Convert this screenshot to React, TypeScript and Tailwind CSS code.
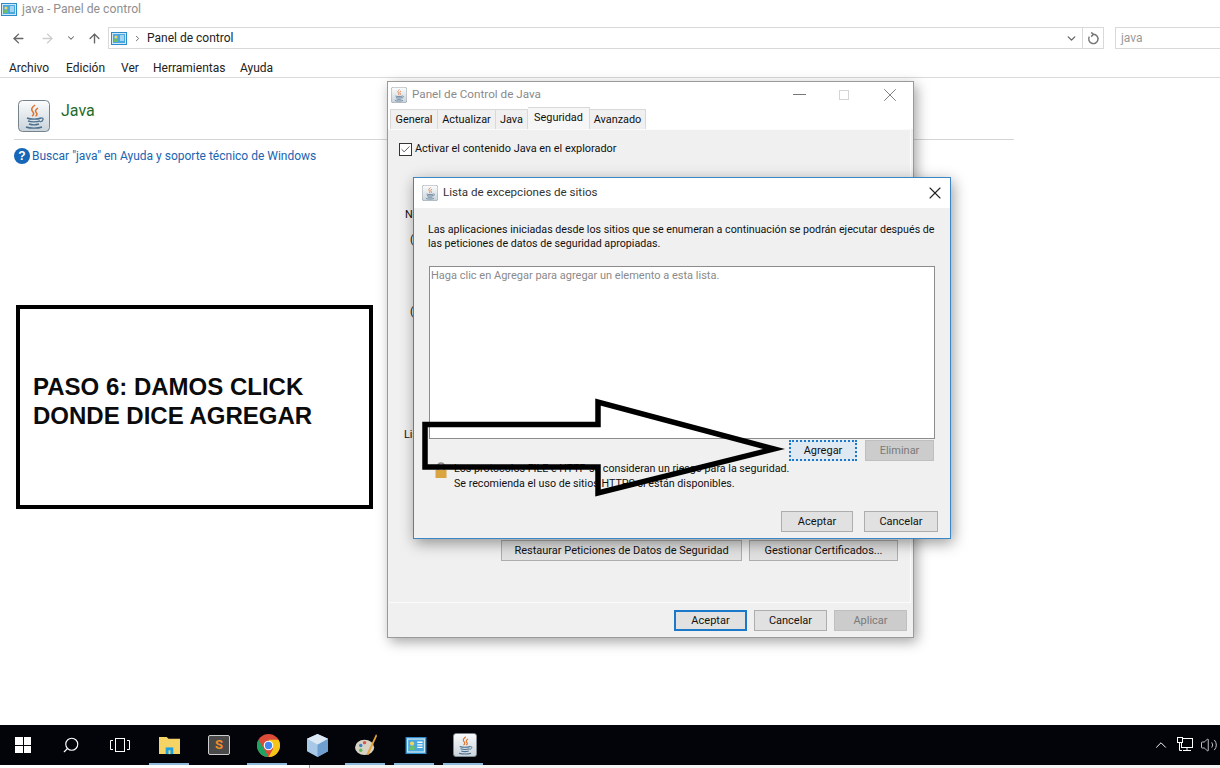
import { ArrowLeft, ArrowRight, ArrowUp, ChevronDown, ChevronRight, ChevronUp, Search, X, Check, Volume2 } from 'lucide-react';

function ControlPanelIcon({ className }: { className: string }) {
  return (
    <svg viewBox="0 0 16 13" className={className}>
      <rect x="0.5" y="0.5" width="15" height="12" fill="#cfe8f7" stroke="#2d8bc9" />
      <rect x="2" y="2" width="12" height="9" fill="#4aa8e0" />
      <circle cx="5" cy="5" r="1.6" fill="#f4d35e" />
      <rect x="3" y="7" width="4" height="3" fill="#6cbf6a" />
      <path d="M9 4h4M9 6h4M9 8h4" stroke="#fff" strokeWidth="1" />
    </svg>
  );
}

function JavaIcon({ className }: { className: string }) {
  return (
    <svg viewBox="0 0 32 32" className={className}>
      <defs>
        <linearGradient id="javaBg" x1="0" y1="0" x2="0" y2="1">
          <stop offset="0" stopColor="#fbfcfd" />
          <stop offset="1" stopColor="#c9d3da" />
        </linearGradient>
      </defs>
      <rect x="0.5" y="0.5" width="31" height="31" rx="4" fill="url(#javaBg)" stroke="#76838c" />
      <path d="M17 5c-4 3-4 5-2 7 1 1.500 1 3-1 4M20 8c-3 2-3 3-1.500 5 1 1 .5 2.500-1 3" fill="none" stroke="#e0702a" strokeWidth="1.500" />
      <path d="M9 18c3 1.500 11 1.500 14 0M10 21c3 1 9 1 12 0M11 24c3 1 7 1 10 0M8 27c4 1.500 12 1.500 16 0" fill="none" stroke="#4b6f8e" strokeWidth="1.400" />
      <path d="M23 18c3-.5 3 3-1 4" fill="none" stroke="#4b6f8e" strokeWidth="1.200" />
    </svg>
  );
}

function HelpIcon() {
  return (
    <div className="w-4 h-4 rounded-full bg-[#1667b8] text-white text-[12px] font-bold flex items-center justify-center font-['Liberation_Sans',sans-serif]">
      ?
    </div>
  );
}

function WinButton({ label, w, tone = 'normal' }: { label: string; w: string; tone?: 'normal' | 'off' | 'default' | 'focus' }) {
  const toneClass =
    tone === 'off'
      ? 'bg-[#cccccc] border-[#bfbfbf] text-[#7a7a7a]'
      : tone === 'default'
        ? 'bg-[#e1e1e1] border-[#1c78c8] border-2 text-[#111]'
        : tone === 'focus'
          ? 'bg-[#dfe9f2] border-[#1c78c8] border-2 border-dotted text-[#111]'
          : 'bg-[#e1e1e1] border-[#adadad] text-[#111]';
  return <div className={`${w} h-[21px] border flex items-center justify-center pt-[1px] text-[11px] ${toneClass}`}>{label}</div>;
}

function Arrow() {
  return (
    <svg viewBox="0 0 380 110" className="absolute left-[415px] top-[393px] w-[380px] h-[110px] pointer-events-none">
      <path d="M10 31.500H183V9L359 56L183 100V74H10Z" fill="none" stroke="#000" strokeWidth="5.500" />
    </svg>
  );
}

function PanelWindow() {
  return (
    <div className="absolute left-[387px] top-[81px] w-[527px] h-[557px] bg-[#f0f0f0] border border-[#9a9a9a] shadow-[3px_4px_12px_rgba(0,0,0,0.35)] flex flex-col text-[10.9px] text-[#111]">
      <div className="h-[25px] bg-white flex items-center pl-[3px] shrink-0">
        <JavaIcon className="w-4 h-4 mr-[5px]" />
        <span className="text-[11.7px] text-[#8a8a8a]">Panel de Control de Java</span>
        <div className="w-[13px] h-[1px] bg-[#777] ml-auto" />
        <div className="w-[10px] h-[10px] border border-[#d5d5d5] ml-[33px]" />
        <X className="w-[22px] h-[22px] ml-[30px] mr-[12px] text-[#777]" strokeWidth={1} />
      </div>
      <div className="h-[22px] bg-white flex items-end pl-[2px] shrink-0">
        <div className="w-[48px] h-[20px] pt-[1px] bg-[#f0f0f0] border border-b-0 border-[#d9d9d9] flex items-center justify-center">General</div>
        <div className="w-[58px] h-[20px] pt-[1px] bg-[#f0f0f0] border border-b-0 border-l-0 border-[#d9d9d9] flex items-center justify-center">Actualizar</div>
        <div className="w-[32px] h-[20px] pt-[1px] bg-[#f0f0f0] border border-b-0 border-l-0 border-[#d9d9d9] flex items-center justify-center">Java</div>
        <div className="w-[62px] h-[22px] bg-[#f6f6f6] border border-b-0 border-l-0 border-[#d9d9d9] flex items-center justify-center">Seguridad</div>
        <div className="w-[56px] h-[20px] pt-[1px] bg-[#f0f0f0] border border-b-0 border-l-0 border-[#d9d9d9] flex items-center justify-center">Avanzado</div>
      </div>
      <div className="flex-1 ml-[1px] mr-[2px] border-t border-r border-[#fbfbfb] flex flex-col relative">
        <div className="flex items-center mt-[11px] ml-[10px] gap-[3px]">
          <div className="w-[13px] h-[13px] border border-[#333] bg-white flex items-center justify-center">
            <Check className="w-[11px] h-[11px]" strokeWidth={1.500} />
          </div>
          <span>Activar el contenido Java en el explorador</span>
        </div>
        <span className="absolute left-[16px] top-[77px]">Ni</span>
        <span className="absolute left-[21px] top-[102px]">(</span>
        <span className="absolute left-[21px] top-[174px]">(</span>
        <span className="absolute left-[15px] top-[297px]">Lis</span>
        <div className="mt-auto flex justify-end gap-[7px] pr-[12px] mb-[41px]">
          <WinButton label="Restaurar Peticiones de Datos de Seguridad" w="w-[241px]" />
          <WinButton label="Gestionar Certificados..." w="w-[149px]" />
        </div>
      </div>
      <div className="h-[35px] border-t border-[#fbfbfb] ml-[1px] mr-[2px] flex items-start pt-[7px] justify-end gap-[7px] pr-[4px] shrink-0">
        <WinButton label="Aceptar" w="w-[73px]" tone="default" />
        <WinButton label="Cancelar" w="w-[73px]" />
        <WinButton label="Aplicar" w="w-[73px]" tone="off" />
      </div>
    </div>
  );
}

function ExceptionDialog() {
  return (
    <div className="absolute left-[413px] top-[177px] w-[538px] h-[362px] bg-[#f0f0f0] border border-[#3b86c4] shadow-[2px_4px_14px_rgba(0,0,0,0.4)] flex flex-col text-[10.7px] text-[#111]">
      <div className="h-[30px] bg-white flex items-center pl-[8px] shrink-0">
        <JavaIcon className="w-4 h-4 mr-[5px]" />
        <span className="text-[11.6px] text-[#333]">Lista de excepciones de sitios</span>
        <X className="w-[20px] h-[20px] ml-auto mr-[5px] text-[#222]" strokeWidth={1.300} />
      </div>
      <div className="flex-1 flex flex-col pl-[14px] pr-[15px]">
        <p className="mt-[15px] leading-[14px] whitespace-nowrap">
          Las aplicaciones iniciadas desde los sitios que se enumeran a continuación se podrán ejecutar después de
          <br />
          las peticiones de datos de seguridad apropiadas.
        </p>
        <div className="mt-[15px] ml-[1px] h-[173px] bg-white border border-[#8c8c8c] text-[#8a8a8a] pl-[1px] pt-[1px] text-[11px]">
          Haga clic en Agregar para agregar un elemento a esta lista.
        </div>
        <div className="flex justify-end gap-[8px] mt-[1px] pr-[1px]">
          <WinButton label="Agregar" w="w-[68px]" tone="focus" />
          <WinButton label="Eliminar" w="w-[69px]" tone="off" />
        </div>
        <div className="flex ml-[7px] gap-[7px]">
          <svg viewBox="0 0 12 16" className="w-[12px] h-[16px] mt-[1px] shrink-0">
            <path d="M3 8V4a3 3 0 0 1 6 0v4" fill="none" stroke="#8a8a8a" strokeWidth="1.500" />
            <rect x="0.5" y="8" width="11" height="8" fill="#d9a441" />
          </svg>
          <p className="leading-[15px]">
            Los protocolos FILE e HTTP se consideran un riesgo para la seguridad.
            <br />
            Se recomienda el uso de sitios HTTPS si están disponibles.
          </p>
        </div>
        <div className="mt-auto mb-[6px] -mr-[3px] flex justify-end gap-[11px]">
          <WinButton label="Aceptar" w="w-[72px]" />
          <WinButton label="Cancelar" w="w-[74px]" />
        </div>
      </div>
    </div>
  );
}

function Taskbar() {
  return (
    <div className="h-[40px] bg-[#03040a] flex items-center shrink-0 relative">
      <div className="w-[16px] h-[16px] ml-[15px] grid grid-cols-2 gap-[1px]">
        <div className="bg-white" /><div className="bg-white" /><div className="bg-white" /><div className="bg-white" />
      </div>
      <Search className="w-[18px] h-[18px] ml-[31px] text-white -scale-x-100" strokeWidth={1.500} />
      <svg viewBox="0 0 20 14" className="w-[20px] h-[14px] ml-[30px]" fill="none" stroke="#fff">
        <rect x="5.500" y="0.500" width="9" height="13" />
        <path d="M3 2.500H0.500v9H3M17 2.500h2.500v9H17" />
      </svg>
      <svg viewBox="0 0 22 18" className="w-[21px] h-[19px] ml-[29px]">
        <path d="M0 0h8l2 2h12v16H0z" fill="#f6d365" />
        <rect x="7" y="11" width="8" height="7" fill="#1ba1e2" />
        <rect x="10" y="14" width="2" height="4" fill="#f6d365" />
      </svg>
      <div className="w-[22px] h-[20px] ml-[28px] rounded-[2px] bg-[#4a4a4a] border border-[#ccc] text-[#f08c28] text-[13px] font-bold leading-[18px] text-center">S</div>
      <svg viewBox="0 0 24 24" className="w-[23px] h-[23px] ml-[27px]">
        <circle cx="12" cy="12" r="12" fill="#dd4b39" />
        <path d="M12 24a12 12 0 0 1-10.400-18L7 15l5 9z" fill="#1da462" />
        <path d="M12 24a12 12 0 0 0 10.400-18H12l5 9z" fill="#f5c518" />
        <circle cx="12" cy="12" r="5" fill="#fff" />
        <circle cx="12" cy="12" r="3.800" fill="#4285f4" />
      </svg>
      <svg viewBox="0 0 22 24" className="w-[21px] h-[23px] ml-[27px]">
        <path d="M11 0l11 5v13l-11 6-11-6V5z" fill="#a8c8e8" />
        <path d="M11 11l11-6v13l-11 6z" fill="#6f9ed0" />
        <path d="M11 0l11 5-11 6L0 5z" fill="#dbe8f4" />
      </svg>
      <svg viewBox="0 0 24 24" className="w-[23px] h-[23px] ml-[27px]">
        <ellipse cx="10" cy="14" rx="10" ry="8" fill="#d8d2c4" />
        <circle cx="6" cy="12" r="1.800" fill="#3b82c4" />
        <circle cx="10" cy="9" r="1.800" fill="#d9534f" />
        <circle cx="6" cy="17" r="1.800" fill="#5cb85c" />
        <path d="M22 0l1 2-9 20-2-1z" fill="#e8a33d" />
      </svg>
      <ControlPanelIcon className="w-[22px] h-[17px] ml-[27px]" />
      <JavaIcon className="w-[24px] h-[24px] ml-[26px]" />
      <ChevronUp className="w-[18px] h-[18px] text-white absolute left-[1152px] top-[11px]" strokeWidth={1.300} />
      <svg viewBox="0 0 16 16" className="absolute left-[1177px] top-[12px] w-[16px] h-[16px]" fill="none" stroke="#fff">
        <rect x="4.500" y="1.500" width="11" height="9" />
        <rect x="0.500" y="0.500" width="5" height="5" fill="#03040a" />
        <path d="M2.500 5.500V13.500H5M6 13.500h8M10 10.500v3" />
      </svg>
      <Volume2 className="w-[18px] h-[18px] text-white absolute left-[1200px] top-[11px]" strokeWidth={1} />
      {[149, 247, 345, 394, 443].map((x) => (
        <div key={x} className="absolute bottom-0 h-[2px] w-[40px] bg-[#8fbcdc]" style={{ left: x }} />
      ))}
    </div>
  );
}

export default function App() {
  return (
    <div className="relative w-[1220px] h-[768px] bg-white overflow-hidden flex flex-col font-['Roboto',sans-serif] text-[#1a1a1a]">
      <div className="h-[18px] flex items-center pl-[1px] shrink-0">
        <ControlPanelIcon className="w-[16px] h-[13px] mr-[5px]" />
        <span className="text-[12.2px] text-[#8f8f8f]">java - Panel de control</span>
      </div>
      <div className="h-[22px] mt-[9px] flex items-center shrink-0 pl-[11px]">
        <ArrowLeft className="w-[15px] h-[15px] text-[#666]" strokeWidth={2.200} />
        <ArrowRight className="w-[15px] h-[15px] ml-[14px] text-[#cdcdcd]" strokeWidth={2.200} />
        <ChevronDown className="w-[10px] h-[10px] ml-[11px] text-[#666]" strokeWidth={2.500} />
        <ArrowUp className="w-[15px] h-[15px] ml-[11px] text-[#666]" strokeWidth={2.200} />
        <div className="ml-[6px] w-[996px] h-[22px] border border-[#d9d9d9] flex items-center">
          <ControlPanelIcon className="w-[16px] h-[13px] ml-[2px]" />
          <ChevronRight className="w-[9px] h-[9px] ml-[6px] text-[#666]" strokeWidth={2.500} />
          <span className="ml-[5px] text-[12px] text-[#222]">Panel de control</span>
          <ChevronDown className="w-[13px] h-[13px] ml-auto mr-[4px] text-[#666]" strokeWidth={2.500} />
          <div className="w-[21px] h-full border-l border-[#d9d9d9] flex items-center justify-center">
            <svg viewBox="0 0 14 14" className="w-[13px] h-[13px]" fill="none" stroke="#777" strokeWidth="1.600">
              <path d="M7 2.500A5 5 0 1 1 2.500 5" />
              <path d="M4.500 0.500L7 2.500L4.500 5" />
            </svg>
          </div>
        </div>
        <div className="ml-[11px] flex-1 h-[22px] border border-r-0 border-[#d9d9d9] pl-[5px] flex items-center text-[12px] text-[#9a9a9a]">java</div>
      </div>
      <div className="h-[29px] border-b border-[#dadada] flex items-center pt-[10px] pl-[9px] text-[12px] text-[#222] shrink-0">
        <span className="w-[57px]">Archivo</span>
        <span className="w-[55px]">Edición</span>
        <span className="w-[32px]">Ver</span>
        <span className="w-[87px]">Herramientas</span>
        <span>Ayuda</span>
      </div>
      <div className="flex-1 flex flex-col pl-[14px]">
        <div className="flex pl-[4px] pt-[22px] h-[62px] w-[1000px] border-b border-[#d5d5d5]">
          <JavaIcon className="w-[32px] h-[32px]" />
          <span className="ml-[11px] text-[16px] text-[#1e6b2a] leading-[22px]">Java</span>
        </div>
        <div className="flex items-center mt-[7px] gap-[2px]">
          <HelpIcon />
          <span className="text-[12px] text-[#1a64b0]">Buscar "java" en Ayuda y soporte técnico de Windows</span>
        </div>
        <div className="ml-[2px] mt-[140px] w-[357px] h-[204px] border-[4px] border-black pl-[13px] pt-[63px]">
          <p className="font-['Liberation_Sans',sans-serif] font-bold text-[24px] leading-[29px] text-[#0b0b0b]">
            PASO 6: DAMOS CLICK
            <br />
            DONDE DICE AGREGAR
          </p>
        </div>
      </div>
      <Taskbar />
      <div className="h-[3px] shrink-0 flex">
        <div className="w-[309px]" />
        <div className="flex-1 bg-[#f4f4f4] border-l border-[#999]" />
      </div>
      <PanelWindow />
      <ExceptionDialog />
      <Arrow />
    </div>
  );
}
